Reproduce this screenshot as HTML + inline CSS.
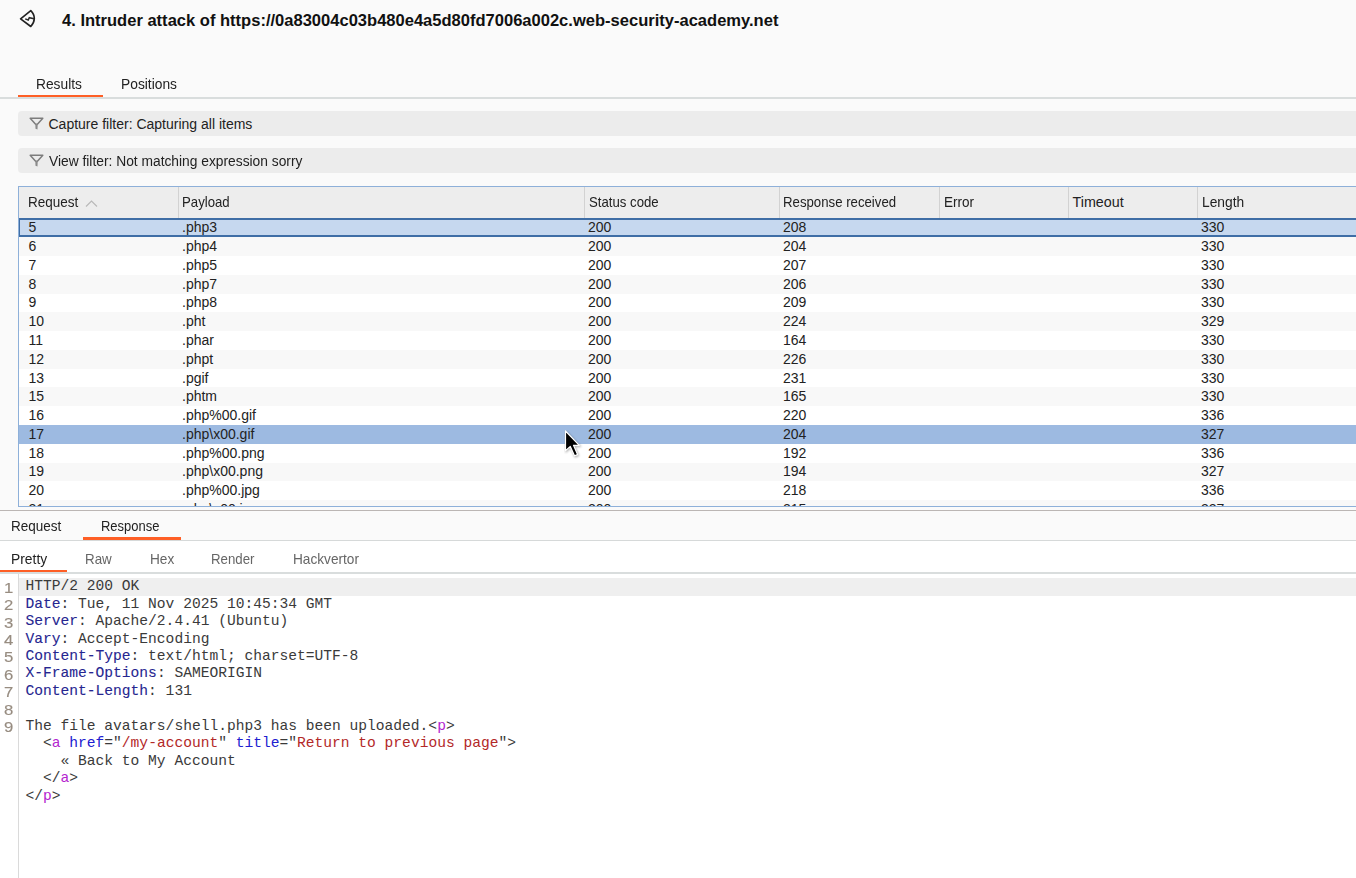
<!DOCTYPE html>
<html><head><meta charset="utf-8">
<style>
*{margin:0;padding:0;box-sizing:border-box}
html,body{width:1356px;height:878px;overflow:hidden;background:#fafafa;font-family:"Liberation Sans",sans-serif;color:#1e1e1e}
.a{position:absolute;white-space:pre}
.title{position:absolute;left:62px;top:10.8px;font-size:16.55px;font-weight:bold;line-height:20px;white-space:pre;color:#111}
.tab{position:absolute;font-size:14.3px;line-height:16px;white-space:pre;color:#222;transform-origin:0 0}
.bar{position:absolute;left:18px;width:1350px;background:#ececec;border-radius:4px}
.bar span{position:absolute;left:30.5px;top:4.8px;font-size:14px;line-height:16px;white-space:pre;color:#222}
.bar svg{position:absolute;left:11px;top:6px}
#tbl{position:absolute;left:18px;top:186px;width:1340px;height:321px;border:1px solid #8eb0d9;border-right:none;background:#fff;overflow:hidden}
.hdr{position:absolute;left:0;top:0;width:1340px;height:31.4px;background:#ededed}
.hdr span{position:absolute;top:7.25px;font-size:14.3px;line-height:16px;white-space:pre;color:#222;transform-origin:0 0}
.sep{position:absolute;top:0;width:1px;height:31.4px;background:#d2d2d2}
.row{position:absolute;left:18px;width:1340px;height:18.8px;background:#fff}
.row.alt{background:#f8f8f8}
.row.sel1{background:#c6d8ef;border-top:2px solid #3f6ea6;border-bottom:2px solid #3f6ea6;border-left:2px solid #3f6ea6}
.row.sel2{background:#9dbae1}
.row.sel1 .c{top:-1.2px;margin-left:-2px}
.c{position:absolute;top:0.9px;font-size:14px;line-height:16px;white-space:pre;color:#222}
.ln{position:absolute;left:4.4px;font-size:14.4px;line-height:17.45px;color:#978c80;transform:scaleX(1.16);transform-origin:0 0;-webkit-text-stroke:0.15px #978c80;font-family:"Liberation Sans",sans-serif}
.cl{position:absolute;left:25.5px;font-family:"Liberation Mono",monospace;font-size:14.6px;line-height:17.45px;white-space:pre;color:#3a3a3a}
.k{color:#262690;-webkit-text-stroke:0.1px #262690}
.n{color:#2020d0}
.g{color:#b425cf}
.s{color:#b32828}
</style></head><body>
<svg class="a" style="left:19px;top:9px" width="18" height="20" viewBox="0 0 18 20">
<path d="M1.6,9.8 L11.8,1.6 Q15.3,5 15.3,9.6 Q15.2,14 11.8,17.5 Z" fill="none" stroke="#222" stroke-width="1.65" stroke-linejoin="round"/>
<path d="M6.2,9.9 L9.2,11 L10.3,8.7 L15,9.8" fill="none" stroke="#2a2a2a" stroke-width="1.5" stroke-linejoin="miter"/>
</svg>
<div class="title">4. Intruder attack of https://0a83004c03b480e4a5d80fd7006a002c.web-security-academy.net</div>

<div class="tab" style="left:36.2px;top:75.55px;transform:scaleX(0.963)">Results</div>
<div class="tab" style="left:121px;top:75.55px;transform:scaleX(0.965)">Positions</div>
<div class="a" style="left:0;top:97px;width:1356px;height:1.9px;background:#d9dddd"></div>
<div class="a" style="left:18px;top:94.5px;width:85px;height:2.6px;background:#fe5f26"></div>

<div class="bar" style="top:111px;height:24.8px">
<svg width="15" height="14" viewBox="0 0 15 14"><path d="M1.2,1.3 L13.8,1.3 L8.4,7.2 L6.6,7.2 Z" fill="none" stroke="#7c7c7c" stroke-width="1.5" stroke-linejoin="round"/><path d="M6.3,7 L8.7,7 L8.5,12.6 L6.5,11.8 Z" fill="#8a8a8a"/></svg>
<span>Capture filter: Capturing all items</span></div>
<div class="bar" style="top:148.3px;height:24.7px">
<svg width="15" height="14" viewBox="0 0 15 14"><path d="M1.2,1.3 L13.8,1.3 L8.4,7.2 L6.6,7.2 Z" fill="none" stroke="#7c7c7c" stroke-width="1.5" stroke-linejoin="round"/><path d="M6.3,7 L8.7,7 L8.5,12.6 L6.5,11.8 Z" fill="#8a8a8a"/></svg>
<span style="transform:scaleX(0.985);transform-origin:0 0">View filter: Not matching expression sorry</span></div>

<div id="tbl">
<div class="hdr">
<span style="left:9.3px;transform:scaleX(0.945)">Request</span>
<svg class="a" style="left:66px;top:13px" width="13" height="7" viewBox="0 0 13 7"><path d="M1,6.5 L6.5,1 L12,6.5" fill="none" stroke="#b8b8b8" stroke-width="1.1"/></svg>
<div class="sep" style="left:159px"></div><span style="left:163.2px;transform:scaleX(0.923)">Payload</span>
<div class="sep" style="left:565px"></div><span style="left:569.8px;transform:scaleX(0.923)">Status code</span>
<div class="sep" style="left:760px"></div><span style="left:764.3px;transform:scaleX(0.924)">Response received</span>
<div class="sep" style="left:920px"></div><span style="left:924.7px;transform:scaleX(0.945)">Error</span>
<div class="sep" style="left:1049px"></div><span style="left:1053.5px;transform:scaleX(1.0)">Timeout</span>
<div class="sep" style="left:1178px"></div><span style="left:1182.7px;transform:scaleX(0.965)">Length</span>
</div>
</div>
<div id="rows" style="position:absolute;left:0;top:0;width:1356px;height:506px;overflow:hidden;clip-path:inset(218px 0 0 19px)">
<div class="row sel1" style="top:218.40px"><span class="c" style="left:10.5px">5</span><span class="c" style="left:164px">.php3</span><span class="c" style="left:570px">200</span><span class="c" style="left:765px">208</span><span class="c" style="left:1183px">330</span></div><div class="row alt" style="top:237.18px"><span class="c" style="left:10.5px">6</span><span class="c" style="left:164px">.php4</span><span class="c" style="left:570px">200</span><span class="c" style="left:765px">204</span><span class="c" style="left:1183px">330</span></div><div class="row" style="top:255.96px"><span class="c" style="left:10.5px">7</span><span class="c" style="left:164px">.php5</span><span class="c" style="left:570px">200</span><span class="c" style="left:765px">207</span><span class="c" style="left:1183px">330</span></div><div class="row alt" style="top:274.74px"><span class="c" style="left:10.5px">8</span><span class="c" style="left:164px">.php7</span><span class="c" style="left:570px">200</span><span class="c" style="left:765px">206</span><span class="c" style="left:1183px">330</span></div><div class="row" style="top:293.52px"><span class="c" style="left:10.5px">9</span><span class="c" style="left:164px">.php8</span><span class="c" style="left:570px">200</span><span class="c" style="left:765px">209</span><span class="c" style="left:1183px">330</span></div><div class="row alt" style="top:312.30px"><span class="c" style="left:10.5px">10</span><span class="c" style="left:164px">.pht</span><span class="c" style="left:570px">200</span><span class="c" style="left:765px">224</span><span class="c" style="left:1183px">329</span></div><div class="row" style="top:331.08px"><span class="c" style="left:10.5px">11</span><span class="c" style="left:164px">.phar</span><span class="c" style="left:570px">200</span><span class="c" style="left:765px">164</span><span class="c" style="left:1183px">330</span></div><div class="row alt" style="top:349.86px"><span class="c" style="left:10.5px">12</span><span class="c" style="left:164px">.phpt</span><span class="c" style="left:570px">200</span><span class="c" style="left:765px">226</span><span class="c" style="left:1183px">330</span></div><div class="row" style="top:368.64px"><span class="c" style="left:10.5px">13</span><span class="c" style="left:164px">.pgif</span><span class="c" style="left:570px">200</span><span class="c" style="left:765px">231</span><span class="c" style="left:1183px">330</span></div><div class="row alt" style="top:387.42px"><span class="c" style="left:10.5px">15</span><span class="c" style="left:164px">.phtm</span><span class="c" style="left:570px">200</span><span class="c" style="left:765px">165</span><span class="c" style="left:1183px">330</span></div><div class="row" style="top:406.20px"><span class="c" style="left:10.5px">16</span><span class="c" style="left:164px">.php%00.gif</span><span class="c" style="left:570px">200</span><span class="c" style="left:765px">220</span><span class="c" style="left:1183px">336</span></div><div class="row sel2" style="top:424.98px"><span class="c" style="left:10.5px">17</span><span class="c" style="left:164px">.php\x00.gif</span><span class="c" style="left:570px">200</span><span class="c" style="left:765px">204</span><span class="c" style="left:1183px">327</span></div><div class="row" style="top:443.76px"><span class="c" style="left:10.5px">18</span><span class="c" style="left:164px">.php%00.png</span><span class="c" style="left:570px">200</span><span class="c" style="left:765px">192</span><span class="c" style="left:1183px">336</span></div><div class="row alt" style="top:462.54px"><span class="c" style="left:10.5px">19</span><span class="c" style="left:164px">.php\x00.png</span><span class="c" style="left:570px">200</span><span class="c" style="left:765px">194</span><span class="c" style="left:1183px">327</span></div><div class="row" style="top:481.32px"><span class="c" style="left:10.5px">20</span><span class="c" style="left:164px">.php%00.jpg</span><span class="c" style="left:570px">200</span><span class="c" style="left:765px">218</span><span class="c" style="left:1183px">336</span></div><div class="row alt" style="top:500.10px"><span class="c" style="left:10.5px">21</span><span class="c" style="left:164px">.php\x00.jpg</span><span class="c" style="left:570px">200</span><span class="c" style="left:765px">215</span><span class="c" style="left:1183px">327</span></div>
</div>
<svg class="a" style="left:564px;top:430px" width="20" height="30" viewBox="0 0 20 30"><defs><filter id="sh" x="-50%" y="-50%" width="200%" height="200%"><feGaussianBlur stdDeviation="0.9"/></filter></defs><path d="M2.3,2.2 L2.3,21.5 L7,17.3 L11.2,26.8 L14.3,25.5 L10.2,16.2 L16,16.2 Z" fill="#000" opacity="0.3" stroke="#000" stroke-width="1.5" filter="url(#sh)"/><path d="M1.5,1 L1.5,20.6 L6.3,16.4 L10.5,25.8 L13.6,24.6 L9.5,15.3 L15.3,15.3 Z" fill="#000" stroke="#fff" stroke-width="1.2" stroke-linejoin="round"/></svg>

<div class="a" style="left:0;top:510px;width:1356px;height:1px;background:#bbb6b4"></div>
<div class="a" style="left:0;top:540px;width:1356px;height:338px;background:#fff"></div>
<div class="tab" style="left:10.8px;top:518.05px;transform:scaleX(0.945)">Request</div>
<div class="tab" style="left:100.7px;top:518.05px;transform:scaleX(0.907)">Response</div>
<div class="a" style="left:0;top:540px;width:1356px;height:1px;background:#d6d9d9"></div>
<div class="a" style="left:83px;top:537.4px;width:98px;height:2.4px;background:#fe5f26"></div>

<div class="tab" style="left:10.8px;top:550.85px;transform:scaleX(0.968)">Pretty</div>
<div class="tab" style="left:84.5px;top:550.85px;transform:scaleX(0.936);color:#666">Raw</div>
<div class="tab" style="left:149.8px;top:550.85px;transform:scaleX(0.955);color:#666">Hex</div>
<div class="tab" style="left:211px;top:550.85px;transform:scaleX(0.928);color:#666">Render</div>
<div class="tab" style="left:292.5px;top:550.85px;transform:scaleX(0.955);color:#666">Hackvertor</div>
<div class="a" style="left:0;top:572px;width:1356px;height:2px;background:#d9dddd"></div>
<div class="a" style="left:0;top:569.8px;width:66.5px;height:2.4px;background:#fe5f26"></div>

<div class="a" style="left:18px;top:574px;width:1.2px;height:304px;background:#dadada"></div>
<div class="a" style="left:19.2px;top:578.2px;width:1337px;height:17.5px;background:#efefef"></div>
<div class="ln" style="top:579.60px">1</div><div class="cl" style="top:578.20px"><span class="t">HTTP/2 200 OK</span></div><div class="ln" style="top:597.05px">2</div><div class="cl" style="top:595.65px"><span class="k">Date</span>: Tue, 11 Nov 2025 10:45:34 GMT</div><div class="ln" style="top:614.50px">3</div><div class="cl" style="top:613.10px"><span class="k">Server</span>: Apache/2.4.41 (Ubuntu)</div><div class="ln" style="top:631.95px">4</div><div class="cl" style="top:630.55px"><span class="k">Vary</span>: Accept-Encoding</div><div class="ln" style="top:649.40px">5</div><div class="cl" style="top:648.00px"><span class="k">Content-Type</span>: text/html; charset=UTF-8</div><div class="ln" style="top:666.85px">6</div><div class="cl" style="top:665.45px"><span class="k">X-Frame-Options</span>: SAMEORIGIN</div><div class="ln" style="top:684.30px">7</div><div class="cl" style="top:682.90px"><span class="k">Content-Length</span>: 131</div><div class="ln" style="top:701.75px">8</div><div class="cl" style="top:700.35px"></div><div class="ln" style="top:719.20px">9</div><div class="cl" style="top:717.80px">The file avatars/shell.php3 has been uploaded.&lt;<span class="g">p</span>&gt;</div><div class="cl" style="top:735.25px">  &lt;<span class="g">a</span> <span class="n">href</span>="<span class="s">/my-account</span>" <span class="n">title</span>="<span class="s">Return to previous page</span>"&gt;</div><div class="cl" style="top:752.70px">    &laquo; Back to My Account</div><div class="cl" style="top:770.15px">  &lt;/<span class="g">a</span>&gt;</div><div class="cl" style="top:787.60px">&lt;/<span class="g">p</span>&gt;</div>
</body></html>
